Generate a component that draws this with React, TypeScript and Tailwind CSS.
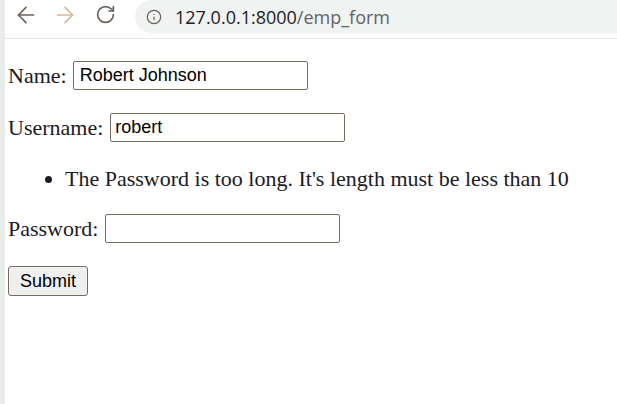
import { ArrowLeft, ArrowRight, RotateCw, Info } from "lucide-react"

export default function App() {
  return (
    <div className="flex w-[617px] h-[404px] bg-white overflow-hidden">
      {/* window edge */}
      <div className="w-[5px] h-full bg-[#e8ecea]" />

      <div className="flex-1 flex flex-col">
        {/* Browser toolbar */}
        <div className="h-[39px] flex items-start border-b border-[#e3e6e5]">
          <div className="flex items-center h-[29px] pl-[8px]">
            <ArrowLeft size={26} strokeWidth={1.5} className="text-[#6a625c]" />
            <ArrowRight size={26} strokeWidth={1.5} className="ml-[13px] text-[#d6b895]" />
            <RotateCw size={21} strokeWidth={1.9} className="ml-[17px] text-[#6a625c]" />
          </div>
          <div className="ml-[19px] flex-1 h-[33px] bg-[#f1f3f2] rounded-l-full flex items-center pl-[11px]">
            <Info size={16} strokeWidth={1.8} className="text-[#6a625c]" />
            <span
              className="ml-[13px] text-[18px] leading-none text-[#202124]"
              style={{ fontFamily: '"Open Sans", "Liberation Sans", sans-serif' }}
            >
              127.0.0.1:8000<span className="text-[#5f6368]">/emp_form</span>
            </span>
          </div>
        </div>

        {/* Page content */}
        <form
          className="pl-[3px] pt-[22px] flex flex-col items-start text-[22px] text-[#1b1a26]"
          style={{ fontFamily: '"Liberation Serif", "Times New Roman", serif' }}
        >
          <div className="flex items-center h-[29px]">
            <label>Name:</label>
            <input
              defaultValue="Robert Johnson"
              className="ml-[6px] w-[235px] h-[29px] border border-[#766b60] rounded-[2px] px-[6px] text-[18px] text-black outline-none"
              style={{ fontFamily: '"Liberation Sans", Arial, sans-serif' }}
            />
          </div>

          <div className="flex items-center h-[29px] mt-[23px]">
            <label>Username:</label>
            <input
              defaultValue="robert"
              className="ml-[7px] w-[235px] h-[29px] border border-[#766b60] rounded-[2px] px-[4px] text-[18px] text-black outline-none"
              style={{ fontFamily: '"Liberation Sans", Arial, sans-serif' }}
            />
          </div>

          <ul className="list-disc pl-[57px] mt-[24px] leading-[26px]">
            <li>The Password is too long. It's length must be less than 10</li>
          </ul>

          <div className="flex items-center h-[29px] mt-[22px]">
            <label>Password:</label>
            <input
              type="password"
              className="ml-[7px] w-[235px] h-[29px] border border-[#766b60] rounded-[2px] px-[4px] text-[18px] outline-none"
            />
          </div>

          <button
            type="button"
            className="mt-[23px] w-[80px] h-[30px] bg-[#efefef] border border-[#766b60] rounded-[3px] text-[18px] text-black"
            style={{ fontFamily: '"Liberation Sans", Arial, sans-serif' }}
          >
            Submit
          </button>
        </form>
      </div>
    </div>
  )
}
